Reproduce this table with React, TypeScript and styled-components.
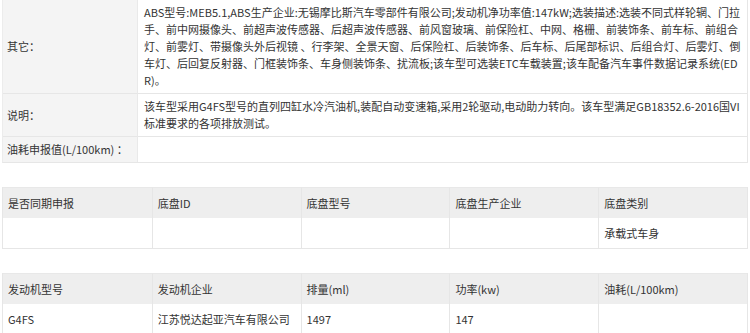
import React from "react";
import styled, { createGlobalStyle } from "styled-components";

const Global = createGlobalStyle`
  html, body { margin: 0; padding: 0; background: #fff; }
  body {
    font-family: "Noto Sans CJK SC", "Noto Sans", sans-serif;
    font-size: 11px;
    color: #333333;
  }
`;

const Page = styled.div`
  width: 750px;
  padding: 0 2px;
  box-sizing: border-box;
  display: flex;
  flex-direction: column;
  gap: 24px;
`;

const InfoTable = styled.div`
  display: grid;
  grid-template-columns: 134px 1fr;
  border-bottom: 1px solid #e6e6e6;
  border-left: 1px solid #ececec;
  border-right: 1px solid #e6e6e6;
  margin-top: -1px;
`;

const Label = styled.div`
  background: #f4f4f4;
  display: flex;
  align-items: center;
  padding: 0 4px;
  line-height: 17px;
  border-top: 1px solid #e6e6e6;
  white-space: nowrap;
`;

const Value = styled.div`
  background: #fff;
  padding: 4px 4px 4px 6px;
  line-height: 17px;
  min-height: 17px;
  border-top: 1px solid #e6e6e6;
  border-left: 1px solid #e9e9e9;
  word-break: break-all;
`;

const Grid = styled.div`
  display: grid;
  grid-template-columns: repeat(5, 1fr);
  border: 1px solid #e6e6e6;
  border-top: none;
`;

const Cell = styled.div<{ $head?: boolean; $first?: boolean }>`
  height: 30px;
  display: flex;
  align-items: center;
  padding: 0 5px;
  background: ${(p) => (p.$head ? "#eeeeee" : "#ffffff")};
  border-left: ${(p) => (p.$first ? "none" : "1px solid #e6e6e6")};
  border-top: ${(p) => (p.$head ? "1px solid #e8e8e8" : "none")};
  white-space: nowrap;
  overflow: hidden;
`;

const otherText =
  "ABS型号:MEB5.1,ABS生产企业:无锡摩比斯汽车零部件有限公司;发动机净功率值:147kW;选装描述:选装不同式样轮辋、门拉手、前中网摄像头、前超声波传感器、后超声波传感器、前风窗玻璃、前保险杠、中网、格栅、前装饰条、前车标、前组合灯、前雾灯、带摄像头外后视镜 、行李架、全景天窗、后保险杠、后装饰条、后车标、后尾部标识、后组合灯、后雾灯、倒车灯、后回复反射器、门框装饰条、车身侧装饰条、扰流板;该车型可选装ETC车载装置;该车配备汽车事件数据记录系统(EDR)。";

const descText =
  "该车型采用G4FS型号的直列四缸水冷汽油机,装配自动变速箱,采用2轮驱动,电动助力转向。该车型满足GB18352.6-2016国VI标准要求的各项排放测试。";

const chassisHead = ["是否同期申报", "底盘ID", "底盘型号", "底盘生产企业", "底盘类别"];
const chassisRow = ["", "", "", "", "承载式车身"];
const engineHead = ["发动机型号", "发动机企业", "排量(ml)", "功率(kw)", "油耗(L/100km)"];
const engineRow = ["G4FS", "江苏悦达起亚汽车有限公司", "1497", "147", ""];

function DataGrid({ head, row }: { head: string[]; row: string[] }) {
  return (
    <Grid>
      {head.map((h, i) => (
        <Cell key={"h" + i} $head $first={i === 0}>
          {h}
        </Cell>
      ))}
      {row.map((v, i) => (
        <Cell key={"r" + i} $first={i === 0}>
          {v}
        </Cell>
      ))}
    </Grid>
  );
}

export default function App() {
  return (
    <>
      <Global />
      <Page>
        <InfoTable>
          <Label>其它：</Label>
          <Value>{otherText}</Value>
          <Label>说明：</Label>
          <Value>{descText}</Value>
          <Label>油耗申报值(L/100km) ：</Label>
          <Value></Value>
        </InfoTable>
        <DataGrid head={chassisHead} row={chassisRow} />
        <DataGrid head={engineHead} row={engineRow} />
      </Page>
    </>
  );
}
